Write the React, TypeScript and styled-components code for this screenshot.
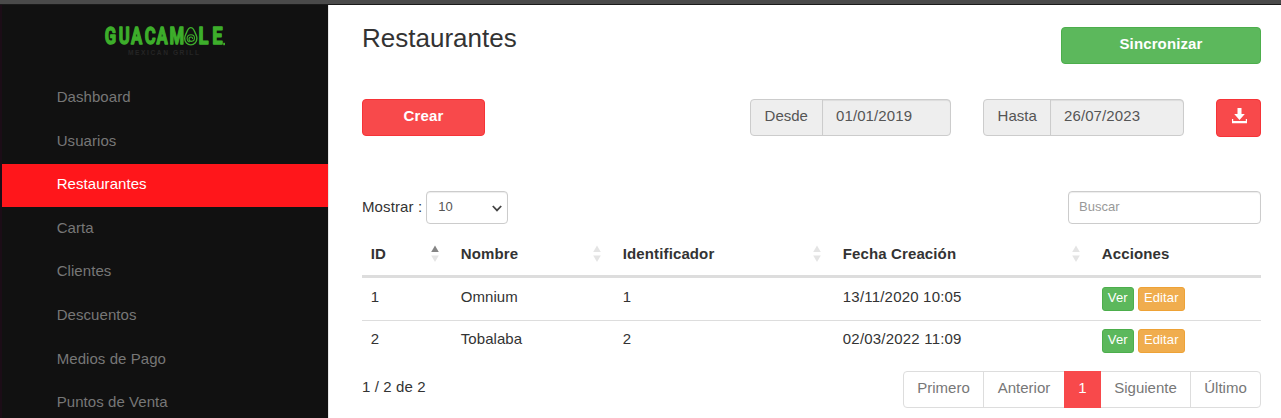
import React from "react";
import styled, { createGlobalStyle, css } from "styled-components";

const GlobalStyle = createGlobalStyle`
  *, *::before, *::after { box-sizing: border-box; }
  body {
    margin: 0;
    background: #fff;
    color: #333;
    font-family: "Liberation Sans", Arial, sans-serif;
    font-size: 15px;
    line-height: 21px;
    overflow: hidden;
  }
`;

const Page = styled.div`
  height: 418px;
  display: flex;
  flex-direction: column;
  overflow: hidden;
`;

const TopBar = styled.div`
  flex: none;
  height: 5px;
  background: #4a4a4a;
  border-bottom: 1px solid #1a1a1a;
`;

const Body = styled.div`
  flex: 1;
  min-height: 0;
  display: flex;
`;

const Sidebar = styled.aside`
  flex: none;
  width: 328px;
  background: #111;
  border-left: 2px solid #1c0d17;
  overflow: hidden;
`;

const LogoArea = styled.div`
  height: 71.5px;
  padding: 19px 0 0 100px;
`;

const NavItem = styled.a<{ $active?: boolean }>`
  display: block;
  height: 43.6px;
  padding: 9.5px 0 0 54.7px;
  line-height: 21px;
  letter-spacing: 0.06px;
  color: ${(p) => (p.$active ? "#fff" : "#777")};
  background: ${(p) => (p.$active ? "#ff161b" : "transparent")};
  text-decoration: none;
`;

const Main = styled.main`
  flex: 1;
  min-width: 0;
  padding: 0 20px 0 33px;
  border-left: 1px solid #e7e7e7;
`;

const Header = styled.div`
  display: flex;
  justify-content: space-between;
  height: 94px;
`;

const Title = styled.h1`
  margin: 18px 0 0;
  font-size: 26px;
  line-height: 30px;
  font-weight: 400;
`;

const tones = {
  green: css`background: #5cb85c; border-color: #4cae4c;`,
  red: css`background: #f8494b; border-color: #f63337;`,
  orange: css`background: #f0ad4e; border-color: #eea236;`,
};

const Button = styled.button<{ $tone: keyof typeof tones; $width: number; $height?: number }>`
  display: flex;
  justify-content: center;
  width: ${(p) => p.$width}px;
  height: ${(p) => p.$height ?? 37}px;
  padding: 5px 0 0;
  border: 1px solid;
  border-radius: 4px;
  color: #fff;
  font: bold 15px/21px "Liberation Sans", Arial, sans-serif;
  letter-spacing: 0.12px;
  ${(p) => tones[p.$tone]}
`;

const HeaderAction = styled.div`
  padding-top: 22px;
`;

const Toolbar = styled.div`
  display: flex;
  height: 92px;
  align-items: flex-start;
`;

const DateGroup = styled.div`
  display: flex;
  height: 37px;
  margin-right: 32px;
  border: 1px solid #ccc;
  border-radius: 4px;
  background: #eee;
  color: #555;
`;

const DateLabel = styled.span<{ $width: number }>`
  width: ${(p) => p.$width}px;
  padding: 5px 0 0 13.6px;
  border-right: 1px solid #ccc;
`;

const DateValue = styled.span<{ $width: number }>`
  width: ${(p) => p.$width}px;
  padding: 5px 0 0 13px;
  border-radius: 0 3px 3px 0;
  box-shadow: inset 0 1px 1px rgba(0, 0, 0, 0.075);
  letter-spacing: 0.1px;
`;

const Spacer = styled.div`
  flex: 1;
`;

const Controls = styled.div`
  display: flex;
  justify-content: space-between;
  height: 43px;
`;

const LengthLabel = styled.label`
  display: flex;
  gap: 4px;
  line-height: 32px;
  letter-spacing: 0.11px;
`;

const SelectBox = styled.span`
  display: flex;
  justify-content: space-between;
  width: 82px;
  height: 33px;
  padding: 0 5px 0 11px;
  border: 1px solid #ccc;
  border-radius: 4px;
  box-shadow: inset 0 1px 1px rgba(0, 0, 0, 0.075);
  color: #555;
  font-size: 13px;
  line-height: 29px;
`;

const Chevron = styled.svg`
  margin-top: 13px;
`;

const Search = styled.input`
  width: 193px;
  height: 33px;
  padding: 0 10px 2px;
  border: 1px solid #ccc;
  border-radius: 4px;
  box-shadow: inset 0 1px 1px rgba(0, 0, 0, 0.075);
  font: 13px "Liberation Sans", Arial, sans-serif;
  &::placeholder { color: #999; opacity: 1; }
`;

const Table = styled.table`
  width: 899px;
  table-layout: fixed;
  border-collapse: separate;
  border-spacing: 0;
`;

const HeadCell = styled.th<{ $width: number }>`
  width: ${(p) => p.$width}px;
  height: 44px;
  padding: 9px 13px 0 8.8px;
  border-bottom: 3px solid #ddd;
  text-align: left;
  vertical-align: top;
  font-weight: bold;
  letter-spacing: 0.12px;
`;

const HeadContent = styled.div`
  display: flex;
  justify-content: space-between;
`;

const SortIcon = styled.svg`
  margin-top: 2px;
`;

const Cell = styled.td<{ $first?: boolean; $numeric?: boolean }>`
  height: 42px;
  padding: ${(p) => (p.$first ? 8 : 7)}px 8.8px 0;
  border-top: ${(p) => (p.$first ? "0" : "1px solid #ddd")};
  vertical-align: top;
  line-height: 21px;
  letter-spacing: ${(p) => (p.$numeric ? "0.2px" : "0.05px")};
`;

const Actions = styled.div`
  display: flex;
  gap: 4px;
  padding-top: 1px;
`;

const SmallButton = styled(Button)`
  padding: 0;
  border-radius: 3px;
  font: 13px/20px "Liberation Sans", Arial, sans-serif;
`;

const Footer = styled.div`
  display: flex;
  justify-content: space-between;
  padding-top: 9px;
`;

const Info = styled.div`
  padding-top: 5px;
  letter-spacing: 0.12px;
`;

const Pager = styled.div`
  display: flex;
  height: 37px;
  border: 1px solid #ddd;
  border-radius: 4px;
  color: #777;
`;

const PageItem = styled.span<{ $width: number; $active?: boolean; $last?: boolean }>`
  width: ${(p) => p.$width}px;
  padding-top: 5px;
  text-align: center;
  border-right: ${(p) => (p.$last || p.$active ? "0" : "1px solid #ddd")};
  ${(p) =>
    p.$active &&
    css`
      margin: -1px 0 -1px -1px;
      padding-top: 6px;
      background: #f8494b;
      color: #fff;
    `}
`;

const LogoSvg = styled.svg`
  display: block;
  overflow: visible;
`;

const Logo = () => (
  <LogoSvg width="126" height="34" viewBox="0 0 126 34" role="img" aria-label="Guacamole Mexican Grill">
    <g
      fill="#3dae2b"
      stroke="#3dae2b"
      strokeWidth="1.4"
      strokeLinejoin="round"
      fontFamily="Roboto, sans-serif"
      fontWeight="700"
      fontSize="23.5"
    >
      <text transform="scale(0.71 1)" x="3.8 23.5 40.9 60.2 76.9 94.9" y="20.4">GUACAM</text>
      <text transform="scale(0.78 1)" x="123.8 141.4" y="20.4">LE</text>
    </g>
    <rect x="121.2" y="18.8" width="1.8" height="2.4" fill="#3dae2b" />
    <g fill="none" stroke="#3dae2b" strokeLinecap="round">
      <path strokeWidth="1.4" d="M88.8 3.6c-2.5 0-3.5 3-4.4 5.3-.9 2.2-1.7 3.3-1.7 5.4 0 3.9 2.7 6.6 6.1 6.6s6.1-2.7 6.1-6.6c0-2.1-.8-3.2-1.7-5.4-.9-2.3-1.9-5.3-4.4-5.3z" />
      <path strokeWidth="1.1" d="M87.2 18c-1.5-.8-2.2-2-2.1-3.6.1-2.2 1.8-3.7 3.9-3.7 2 0 3.5 1.4 3.5 3.4 0 1.9-1.3 3.3-3.1 3.3-1.4 0-2.4-1-2.4-2.3 0-1.2.9-2.1 2-2.1 1 0 1.6.7 1.6 1.5" />
    </g>
    <text x="26" y="30.5" fill="#252525" fontFamily="Liberation Sans, Arial, sans-serif" fontWeight="700" fontSize="6.6" textLength="71">MEXICAN GRILL</text>
  </LogoSvg>
);

const DownloadSvg = styled.svg`
  display: block;
  margin-top: 3px;
  margin-left: 1px;
`;

const DownloadIcon = () => (
  <DownloadSvg width="15" height="16" viewBox="0 0 15 16" fill="#fff">
    <path d="M5.5 0h4v6h3.3L7.5 12 2.2 6h3.3z" />
    <path d="M0 11h1.2v2h12.6v-2H15v4.2H0z" />
  </DownloadSvg>
);

const Sort = ({ asc }: { asc?: boolean }) => (
  <SortIcon width="8" height="18" viewBox="0 0 8 18">
    <path d="M0.2 7L4 0.5 7.8 7z" fill={asc ? "#858585" : "#e4e4e4"} />
    <path d="M0.2 10.5L4 17l3.8-6.5z" fill="#e4e4e4" />
  </SortIcon>
);

const navItems = ["Dashboard", "Usuarios", "Restaurantes", "Carta", "Clientes", "Descuentos", "Medios de Pago", "Puntos de Venta"];

const columns = [
  { label: "ID", width: 90 },
  { label: "Nombre", width: 162 },
  { label: "Identificador", width: 220 },
  { label: "Fecha Creación", width: 259 },
  { label: "Acciones", width: 168 },
];

const rows = [
  ["1", "Omnium", "1", "13/11/2020 10:05"],
  ["2", "Tobalaba", "2", "02/03/2022 11:09"],
];

export default function App() {
  return (
    <>
      <GlobalStyle />
      <Page>
        <TopBar />
        <Body>
          <Sidebar>
            <LogoArea><Logo /></LogoArea>
            <nav>
              {navItems.map((item) => (
                <NavItem key={item} $active={item === "Restaurantes"}>{item}</NavItem>
              ))}
            </nav>
          </Sidebar>
          <Main>
            <Header>
              <Title>Restaurantes</Title>
              <HeaderAction>
                <Button $tone="green" $width={200}>Sincronizar</Button>
              </HeaderAction>
            </Header>
            <Toolbar>
              <Button $tone="red" $width={123}>Crear</Button>
              <Spacer />
              <DateGroup>
                <DateLabel $width={72}>Desde</DateLabel>
                <DateValue $width={127}>01/01/2019</DateValue>
              </DateGroup>
              <DateGroup>
                <DateLabel $width={67}>Hasta</DateLabel>
                <DateValue $width={132}>26/07/2023</DateValue>
              </DateGroup>
              <Button $tone="red" $width={45} $height={38} aria-label="Descargar"><DownloadIcon /></Button>
            </Toolbar>
            <Controls>
              <LengthLabel>
                Mostrar :
                <SelectBox>
                  10
                  <Chevron width="10" height="7" viewBox="0 0 10 7" fill="none" stroke="#444" strokeWidth="1.8">
                    <path d="M0.8 1L5 5.4 9.2 1" />
                  </Chevron>
                </SelectBox>
              </LengthLabel>
              <Search placeholder="Buscar" />
            </Controls>
            <Table>
              <thead>
                <tr>
                  {columns.map((c, i) => (
                    <HeadCell key={c.label} $width={c.width}>
                      <HeadContent>
                        {c.label}
                        {i < 4 && <Sort asc={i === 0} />}
                      </HeadContent>
                    </HeadCell>
                  ))}
                </tr>
              </thead>
              <tbody>
                {rows.map((row, r) => (
                  <tr key={row[0]}>
                    {row.map((value, i) => (
                      <Cell key={i} $first={r === 0} $numeric={i === 3}>{value}</Cell>
                    ))}
                    <Cell $first={r === 0}>
                      <Actions>
                        <SmallButton $tone="green" $width={32} $height={24}>Ver</SmallButton>
                        <SmallButton $tone="orange" $width={47} $height={24}>Editar</SmallButton>
                      </Actions>
                    </Cell>
                  </tr>
                ))}
              </tbody>
            </Table>
            <Footer>
              <Info>1 / 2 de 2</Info>
              <Pager>
                <PageItem $width={80}>Primero</PageItem>
                <PageItem $width={81}>Anterior</PageItem>
                <PageItem $width={37} $active>1</PageItem>
                <PageItem $width={90}>Siguiente</PageItem>
                <PageItem $width={69} $last>Último</PageItem>
              </Pager>
            </Footer>
          </Main>
        </Body>
      </Page>
    </>
  );
}
